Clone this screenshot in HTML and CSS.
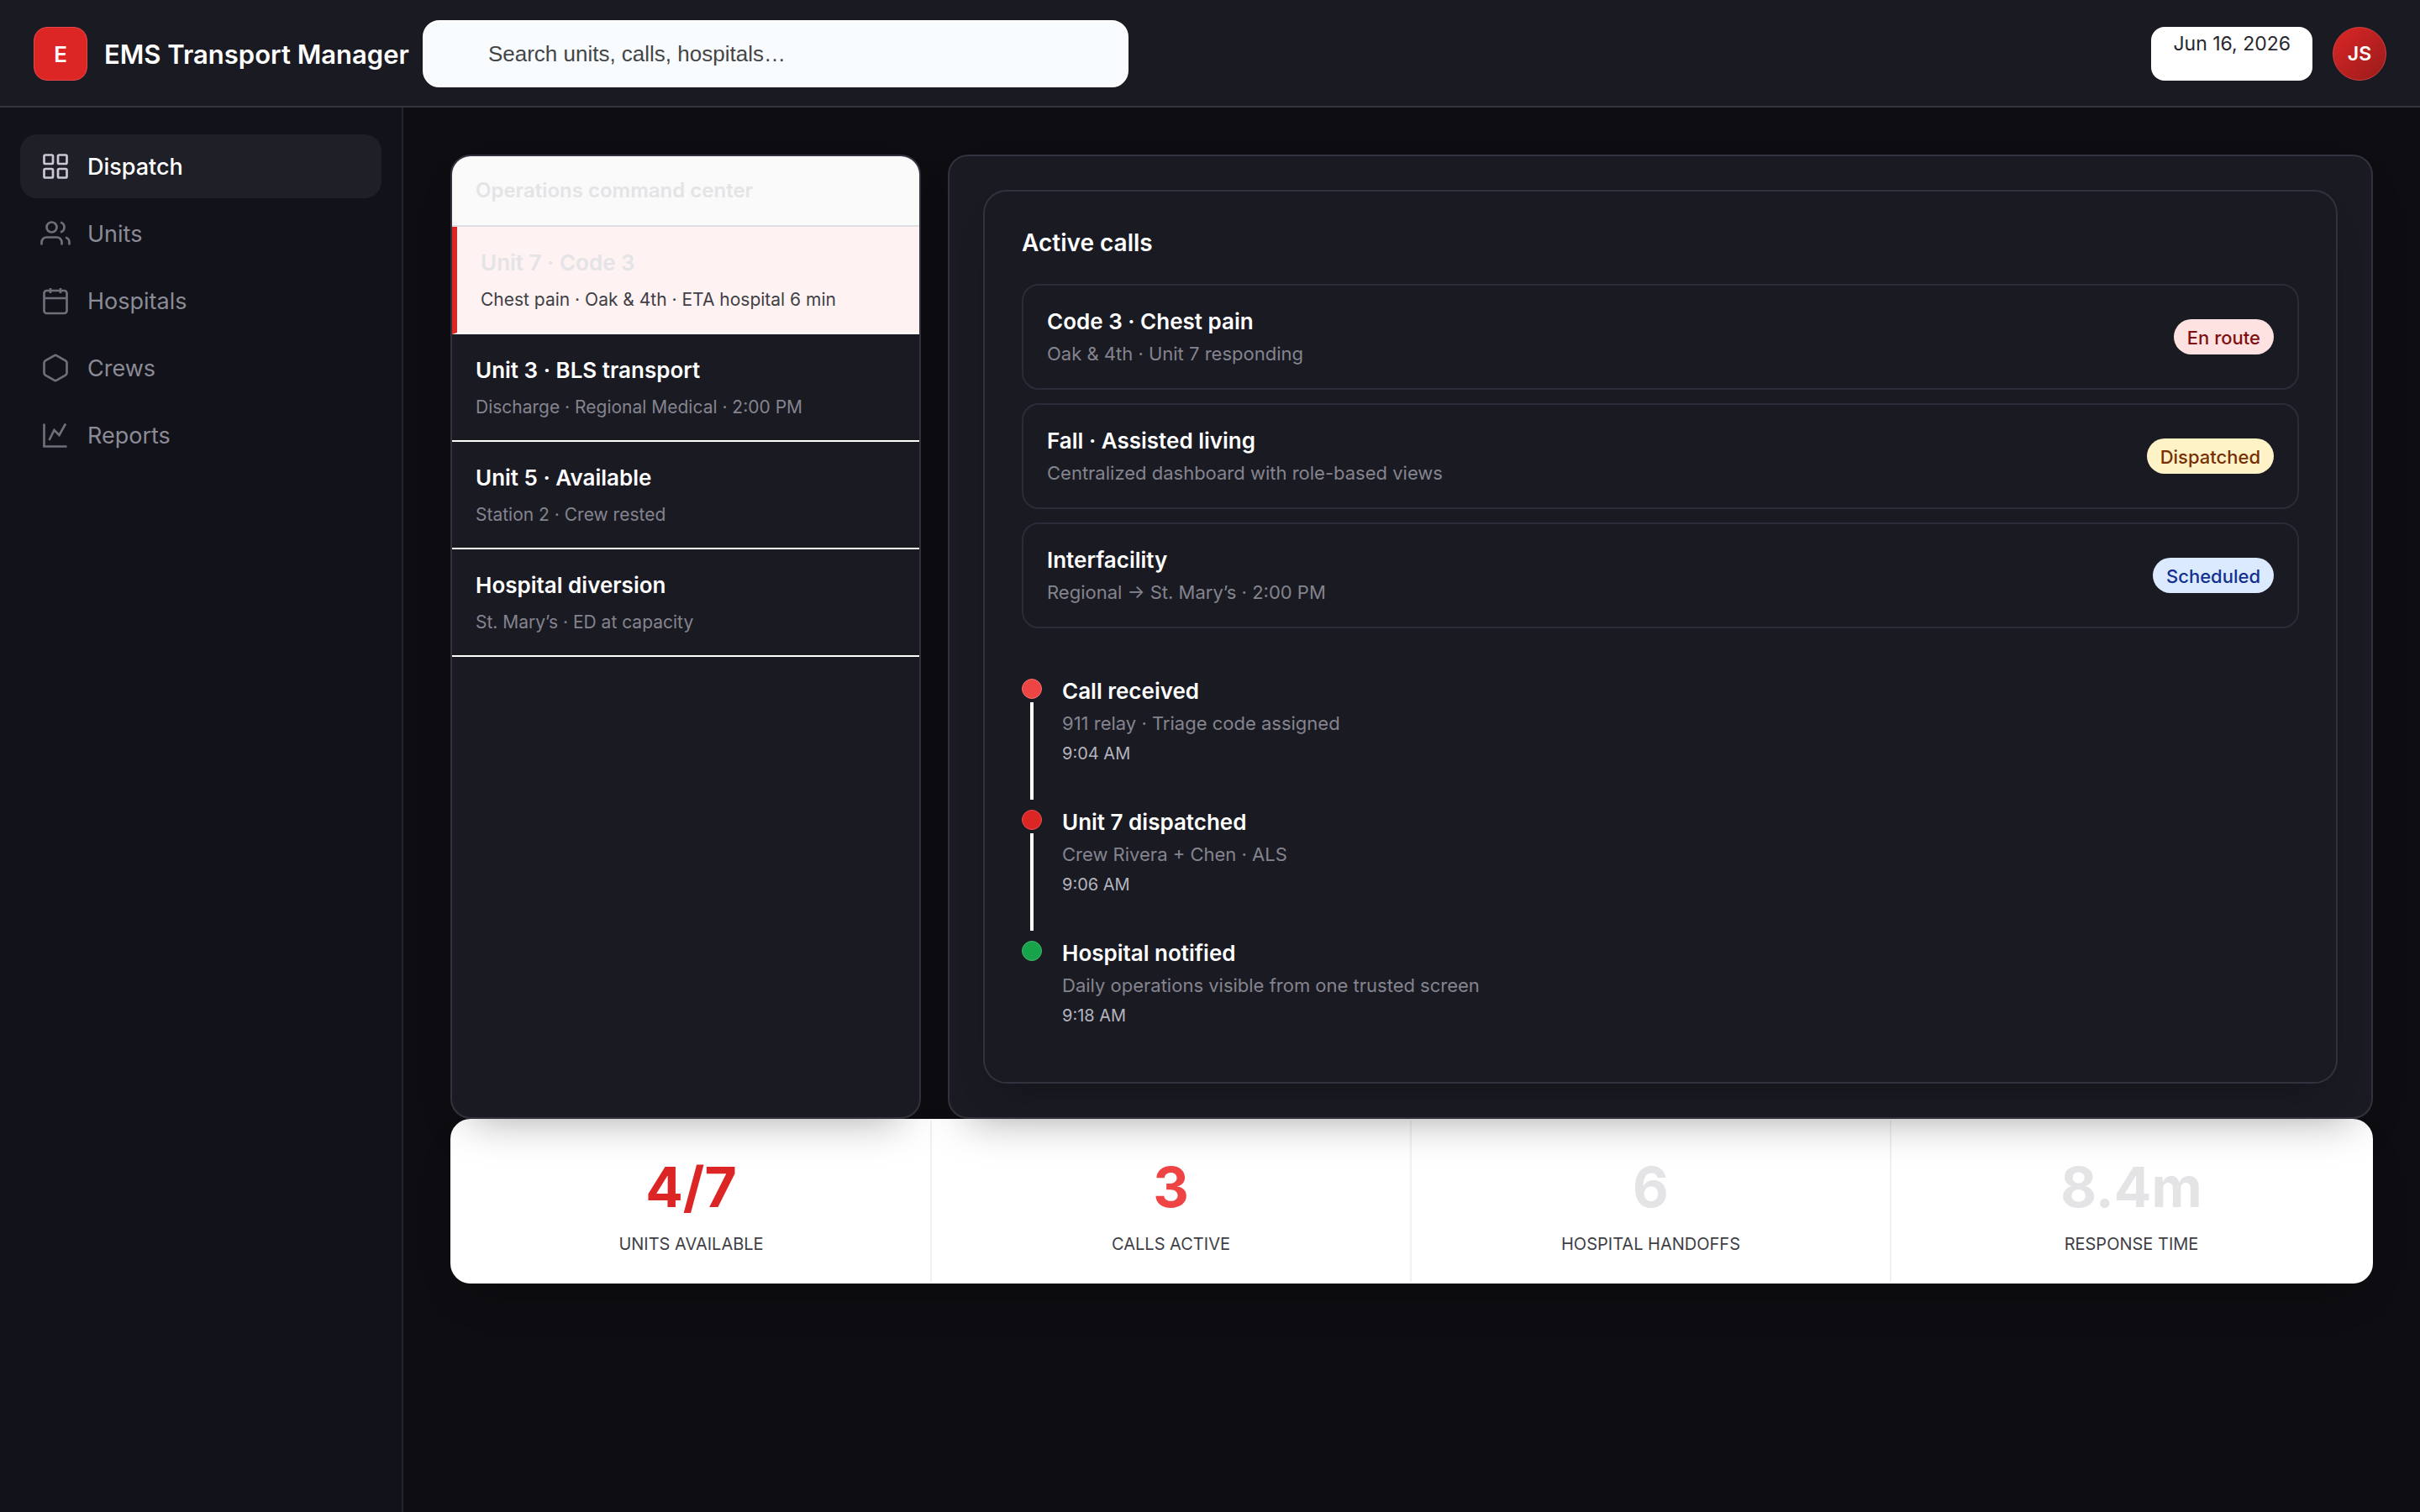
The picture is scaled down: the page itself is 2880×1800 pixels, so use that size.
FILE: index.html
```html
<!DOCTYPE html>
<html lang="en">
<head>
    <meta charset="UTF-8">
    <meta name="viewport" content="width=device-width, initial-scale=1.0">
    <title>EMS Transport Manager</title>
    <link rel="stylesheet" href="styles.css">
</head>
<body>
    <header class="topbar">
        <div class="brand">
            <span class="logo">E</span>
            <span class="brand-name">EMS Transport Manager</span>
        </div>
        <input class="search" type="search" aria-label="Search" placeholder="Search units, calls, hospitals…">
        <div class="topbar-right">
            <button type="button" class="date">Jun 16, 2026</button>
            <button type="button" class="avatar">JS</button>
        </div>
    </header>

    <div class="layout">
        <nav class="sidebar">
            <a class="nav-item active" href="#dispatch">
                <svg class="icon" viewBox="0 0 24 24"><rect x="3" y="3" width="7" height="7" rx="1"/><rect x="14" y="3" width="7" height="7" rx="1"/><rect x="3" y="14" width="7" height="7" rx="1"/><rect x="14" y="14" width="7" height="7" rx="1"/></svg>
                Dispatch
            </a>
            <a class="nav-item" href="#units">
                <svg class="icon" viewBox="0 0 24 24"><path d="M17 21v-2a4 4 0 0 0-4-4H5a4 4 0 0 0-4 4v2"/><circle cx="9" cy="7" r="4"/><path d="M23 21v-2a4 4 0 0 0-3-3.87"/><path d="M16 3.13a4 4 0 0 1 0 7.75"/></svg>
                Units
            </a>
            <a class="nav-item" href="#hospitals">
                <svg class="icon" viewBox="0 0 24 24"><rect x="3" y="4" width="18" height="18" rx="2"/><path d="M16 2v4M8 2v4M3 10h18"/></svg>
                Hospitals
            </a>
            <a class="nav-item" href="#crews">
                <svg class="icon" viewBox="0 0 24 24"><path d="M21 16V8a2 2 0 0 0-1-1.73l-7-4a2 2 0 0 0-2 0l-7 4A2 2 0 0 0 3 8v8a2 2 0 0 0 1 1.73l7 4a2 2 0 0 0 2 0l7-4A2 2 0 0 0 21 16z"/></svg>
                Crews
            </a>
            <a class="nav-item" href="#reports">
                <svg class="icon" viewBox="0 0 24 24"><path d="M3 3v18h18"/><path d="M7 16l4-8 4 4 5-9"/></svg>
                Reports
            </a>
        </nav>

        <main class="content">
            <div class="panels">
                <section class="panel unit-list">
                    <h2 class="list-header">Operations command center</h2>
                    <div class="unit selected">
                        <div class="item-title">Unit 7 · Code 3</div>
                        <div class="item-sub">Chest pain · Oak &amp; 4th · ETA hospital 6 min</div>
                    </div>
                    <div class="unit">
                        <div class="item-title">Unit 3 · BLS transport</div>
                        <div class="item-sub">Discharge · Regional Medical · 2:00 PM</div>
                    </div>
                    <div class="unit">
                        <div class="item-title">Unit 5 · Available</div>
                        <div class="item-sub">Station 2 · Crew rested</div>
                    </div>
                    <div class="unit">
                        <div class="item-title">Hospital diversion</div>
                        <div class="item-sub">St. Mary’s · ED at capacity</div>
                    </div>
                </section>

                <section class="panel detail">
                    <div class="card">
                        <h2 class="card-title">Active calls</h2>
                        <div class="calls">
                            <div class="call">
                                <div>
                                    <div class="item-title">Code 3 · Chest pain</div>
                                    <div class="item-sub">Oak &amp; 4th · Unit 7 responding</div>
                                </div>
                                <span class="pill red">En route</span>
                            </div>
                            <div class="call">
                                <div>
                                    <div class="item-title">Fall · Assisted living</div>
                                    <div class="item-sub">Centralized dashboard with role-based views</div>
                                </div>
                                <span class="pill yellow">Dispatched</span>
                            </div>
                            <div class="call">
                                <div>
                                    <div class="item-title">Interfacility</div>
                                    <div class="item-sub">Regional → St. Mary’s · 2:00 PM</div>
                                </div>
                                <span class="pill blue">Scheduled</span>
                            </div>
                        </div>

                        <ol class="timeline">
                            <li class="event">
                                <div class="rail"><span class="dot"></span><span class="line"></span></div>
                                <div class="event-body">
                                    <div class="item-title">Call received</div>
                                    <div class="item-sub">911 relay · Triage code assigned</div>
                                    <time class="event-time">9:04 AM</time>
                                </div>
                            </li>
                            <li class="event">
                                <div class="rail"><span class="dot dark"></span><span class="line"></span></div>
                                <div class="event-body">
                                    <div class="item-title">Unit 7 dispatched</div>
                                    <div class="item-sub">Crew Rivera + Chen · ALS</div>
                                    <time class="event-time">9:06 AM</time>
                                </div>
                            </li>
                            <li class="event">
                                <div class="rail"><span class="dot green"></span></div>
                                <div class="event-body">
                                    <div class="item-title">Hospital notified</div>
                                    <div class="item-sub">Daily operations visible from one trusted screen</div>
                                    <time class="event-time">9:18 AM</time>
                                </div>
                            </li>
                        </ol>
                    </div>
                </section>
            </div>

            <section class="stats">
                <div class="stat">
                    <div class="stat-value dark-red">4/7</div>
                    <div class="stat-label">Units available</div>
                </div>
                <div class="stat">
                    <div class="stat-value light-red">3</div>
                    <div class="stat-label">Calls active</div>
                </div>
                <div class="stat">
                    <div class="stat-value">6</div>
                    <div class="stat-label">Hospital handoffs</div>
                </div>
                <div class="stat">
                    <div class="stat-value">8.4m</div>
                    <div class="stat-label">Response time</div>
                </div>
            </section>
        </main>
    </div>
</body>
</html>
```

FILE: styles.css
```css
* {
    box-sizing: border-box;
}

body {
    margin: 0;
    min-height: 100vh;
    display: flex;
    flex-direction: column;
    background-color: #0e0e12;
    color: #ffffff;
    font-family: Inter, "Liberation Sans", sans-serif;
    font-size: 26px;
}

h2 {
    margin: 0;
}

/* Top bar */
.topbar {
    display: flex;
    align-items: center;
    gap: 16px;
    height: 128px;
    padding: 2px 40px 0;
    background-color: #1a1a22;
    border-bottom: 2px solid #34343f;
}

.brand {
    display: flex;
    align-items: center;
    gap: 20px;
    white-space: nowrap;
}

.logo {
    display: flex;
    align-items: center;
    justify-content: center;
    width: 64px;
    height: 64px;
    border: 1px solid #e5484a;
    border-radius: 16px;
    background-color: #dc2626;
    font-size: 26px;
    font-weight: 600;
}

.brand-name {
    font-size: 31px;
    font-weight: 600;
}

.search {
    flex: 0 1 840px;
    height: 80px;
    padding: 0 40px 0 76px;
    border: 2px solid #ffffff;
    border-radius: 20px;
    background-color: #f8fcff;
    color: #404040;
    font-family: "Liberation Sans", Arial, sans-serif;
    font-size: 26px;
}

.search::placeholder {
    color: #454545;
}

.topbar-right {
    display: flex;
    align-items: center;
    gap: 24px;
    margin-left: auto;
}

.date {
    display: flex;
    align-items: flex-start;
    height: 64px;
    padding: 6px 26px;
    border: 0;
    border-radius: 16px;
    background-color: #ffffff;
    color: #27272f;
    font-family: inherit;
    font-size: 23px;
}

.avatar {
    width: 64px;
    height: 64px;
    padding: 0;
    border: 1px solid #cf4040;
    border-radius: 50%;
    background: linear-gradient(135deg, #dc2626, #991b1b);
    color: #ffffff;
    font-family: inherit;
    font-size: 23px;
    font-weight: 600;
}

/* Sidebar */
.layout {
    flex: 1;
    display: flex;
}

.sidebar {
    flex: 0 0 480px;
    display: flex;
    flex-direction: column;
    gap: 4px;
    padding: 32px 24px;
    background-color: #12121a;
    border-right: 2px solid #242430;
}

.nav-item {
    display: flex;
    align-items: center;
    gap: 20px;
    height: 76px;
    padding: 0 24px;
    border-radius: 20px;
    color: #8b8b95;
    font-size: 27px;
    text-decoration: none;
}

.nav-item.active {
    background-color: #1f1f28;
    color: #ffffff;
    font-weight: 500;
}

.icon {
    width: 36px;
    height: 36px;
    fill: none;
    stroke: #6f6f79;
    stroke-width: 1.8;
}

.active .icon {
    stroke: #c9c8d4;
}

/* Content */
.content {
    flex: 1;
    min-width: 0;
    padding: 56px;
}

.panels {
    position: relative;
    z-index: 1;
    display: grid;
    grid-template-columns: 560px 1fr;
    gap: 32px;
}

.panel {
    border: 2px solid #32323e;
    border-radius: 24px;
    background-color: #1a1a23;
    box-shadow: 0 24px 48px -24px rgba(0, 0, 0, 0.35);
}

.item-title {
    font-size: 26px;
    font-weight: 600;
    line-height: 38px;
}

.item-sub {
    margin-top: 2px;
    color: #84848e;
    font-size: 22px;
    line-height: 34px;
}

.unit-list {
    overflow: hidden;
}

.list-header {
    padding: 22px 28px;
    border-bottom: 2px solid #dfdfe3;
    background-color: #fafafa;
    color: #e4e4e7;
    font-size: 24px;
    font-weight: 600;
    line-height: 38px;
}

.unit {
    padding: 24px 28px 22px;
    border-bottom: 2px solid #ffffff;
}

.unit .item-sub {
    margin-top: 8px;
    font-size: 21px;
}

.unit.selected {
    border-left: 6px solid #dc2626;
    background-color: #fef2f2;
}

.selected .item-title {
    color: #e4e4e7;
}

.selected .item-sub {
    color: #3f3f46;
}

.detail {
    padding: 40px;
}

.card {
    padding: 44px;
    border: 2px solid #32323e;
    border-radius: 28px;
    box-shadow: 0 24px 48px -24px rgba(0, 0, 0, 0.35);
}

.card-title {
    margin-bottom: 32px;
    font-size: 28px;
    font-weight: 600;
    line-height: 34px;
}

.calls {
    display: flex;
    flex-direction: column;
    gap: 16px;
}

.call {
    display: flex;
    align-items: center;
    justify-content: space-between;
    padding: 24px 28px;
    border: 2px solid #2c2c38;
    border-radius: 20px;
}

.pill {
    padding: 2px 16px 0;
    border-radius: 21px;
    font-size: 22px;
    font-weight: 500;
    line-height: 40px;
}

.pill.red {
    background-color: #fee2e2;
    color: #7f1010;
}

.pill.yellow {
    background-color: #fef3c7;
    color: #782f06;
}

.pill.blue {
    background-color: #dbeafe;
    color: #123090;
}

/* Timeline */
.timeline {
    margin: 56px 0 0;
    padding: 0;
    list-style: none;
}

.event {
    display: flex;
    gap: 24px;
}

.rail {
    display: flex;
    flex-direction: column;
    align-items: center;
}

.dot {
    width: 24px;
    height: 24px;
    margin-top: 4px;
    border: 1px solid #f47070;
    border-radius: 50%;
    background-color: #ef4444;
}

.dot.dark {
    border-color: #e85050;
    background-color: #dc2626;
}

.dot.green {
    border-color: #45b86e;
    background-color: #16a34a;
}

.line {
    flex: 1;
    width: 4px;
    margin: 4px 0 8px;
    background-color: #ffffff;
}

.event-body {
    padding-bottom: 48px;
}

.event:last-child .event-body {
    padding-bottom: 20px;
}

.event-time {
    display: block;
    margin-top: 4px;
    color: #b4b4be;
    font-size: 20px;
    line-height: 30px;
}

/* Stats */
.stats {
    display: grid;
    grid-template-columns: repeat(4, 1fr);
    border: 2px solid #ffffff;
    border-radius: 24px;
    background-color: #ffffff;
    box-shadow: 0 24px 48px -24px rgba(0, 0, 0, 0.35);
}

.stat {
    padding: 28px;
    border-right: 2px solid #f1f1f3;
    text-align: center;
}

.stat:last-child {
    border-right: 0;
}

.stat-value {
    color: #e4e4e7;
    font-size: 66px;
    font-weight: 700;
    line-height: 102px;
}

.stat-value.dark-red {
    color: #dc2626;
}

.stat-value.light-red {
    color: #ef4444;
}

.stat-label {
    color: #3f3f46;
    font-size: 20px;
    line-height: 34px;
    text-transform: uppercase;
}
```
